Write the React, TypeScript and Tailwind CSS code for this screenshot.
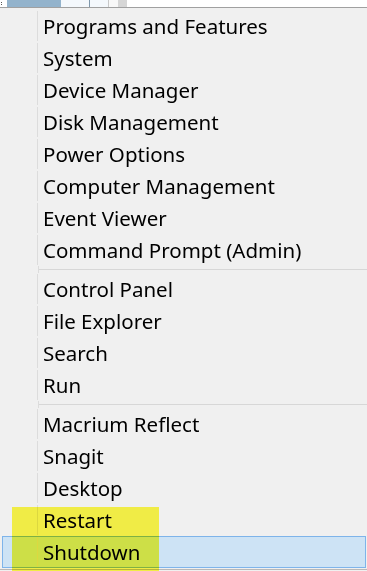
import React from "react";

type Entry = { label: string; selected?: boolean } | "sep";

const entries: Entry[] = [
  { label: "Programs and Features" },
  { label: "System" },
  { label: "Device Manager" },
  { label: "Disk Management" },
  { label: "Power Options" },
  { label: "Computer Management" },
  { label: "Event Viewer" },
  { label: "Command Prompt (Admin)" },
  "sep",
  { label: "Control Panel" },
  { label: "File Explorer" },
  { label: "Search" },
  { label: "Run" },
  "sep",
  { label: "Macrium Reflect" },
  { label: "Snagit" },
  { label: "Desktop" },
  { label: "Restart" },
  { label: "Shutdown", selected: true },
];

export default function App() {
  return (
    <div
      className="relative w-[367px] h-[571px] overflow-hidden bg-[#f0f0f0] text-black"
      style={{ fontFamily: '"Noto Sans", "Open Sans", sans-serif' }}
    >
      {/* strip of the window behind the menu */}
      <div className="flex h-[7px] bg-white">
        <div className="w-[7px] flex flex-col items-start justify-center gap-[1px] pl-[1px]">
          <div className="w-[1px] h-[1px] bg-[#555]" />
          <div className="w-[1px] h-[1px] bg-[#555]" />
        </div>
        <div className="w-[54px] bg-[#93b3cc]" />
        <div className="w-[28px] bg-[#f4f8fc]" />
        <div className="w-[1px] bg-[#7f97ab]" />
        <div className="w-[18px] bg-[#f4f8fc]" />
        <div className="w-[1px] bg-[#c8c8c8]" />
        <div className="w-[9px] bg-[#f8f8f8]" />
        <div className="w-[9px] bg-[#d6d6d6]" />
      </div>
      <div className="h-px bg-[#a0a0a0]" />

      {/* context menu */}
      <div className="flex flex-col pt-[2px]">
        {entries.map((e, i) =>
          e === "sep" ? (
            <div key={i} className="flex h-[7px]">
              <div className="w-[39px] shrink-0 self-stretch border-r border-[#dcdcdc]" />
              <div className="flex-1 pt-[3px]">
                <div className="h-px bg-[#d7d7d7]" />
              </div>
            </div>
          ) : (
            <div
              key={i}
              className={
                e.selected
                  ? "flex h-[32px] items-center ml-[2px] mr-px border border-[#7eb4ea] bg-[#cde3f5]"
                  : "flex h-[32px] items-center ml-[2px] mr-px border border-transparent"
              }
            >
              <div className="w-[35px] shrink-0 self-stretch border-r border-[#dcdcdc]" />
              <span className="pl-[5px] pt-px text-[20.5px] leading-none whitespace-nowrap">
                {e.label}
              </span>
            </div>
          )
        )}
        <div className="h-px" />
        <div className="h-px bg-[#b8b8b8]" />
      </div>

      {/* yellow highlighter mark */}
      <div className="absolute left-[12px] top-[507px] w-[147px] h-[64px] bg-[#fffb4a] mix-blend-multiply" />
    </div>
  );
}
